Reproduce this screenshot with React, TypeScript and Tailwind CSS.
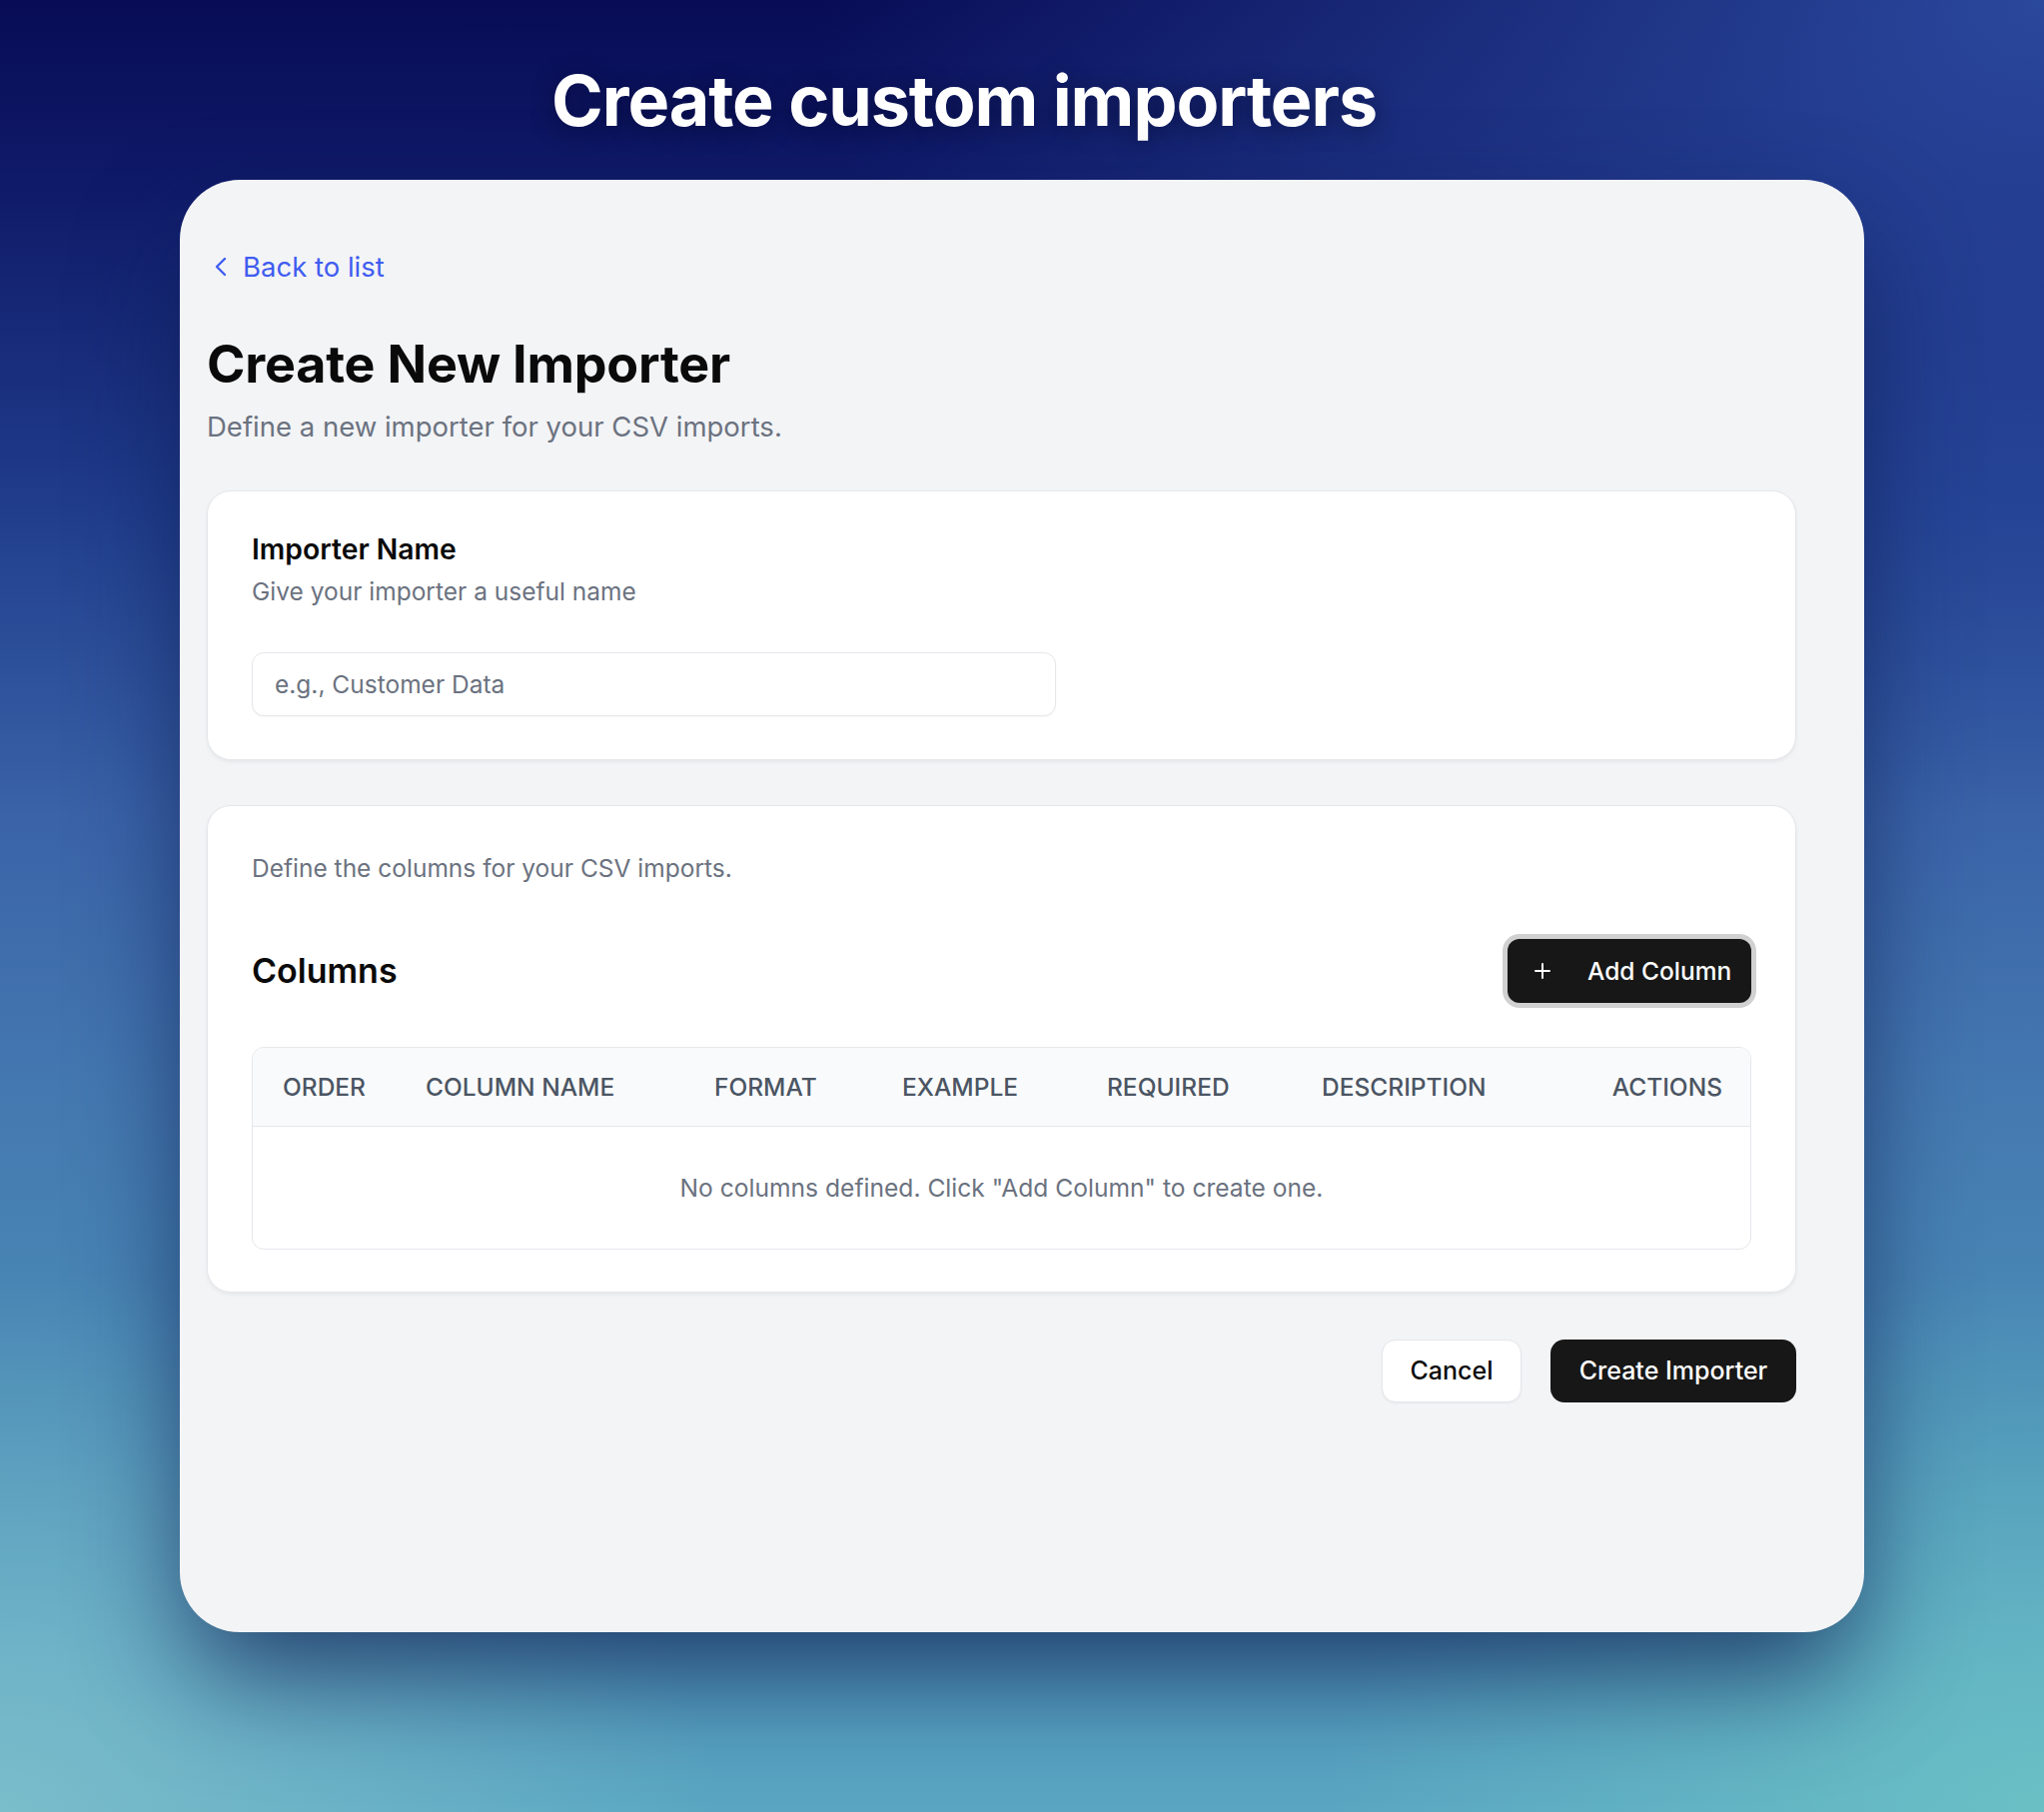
import { ChevronLeft, Plus } from "lucide-react"

const headers = [
  { label: "Order", w: "w-[143px]" },
  { label: "Column Name", w: "w-[289px]" },
  { label: "Format", w: "w-[188px]" },
  { label: "Example", w: "w-[205px]" },
  { label: "Required", w: "w-[215px]" },
  { label: "Description", w: "flex-1" },
]

export default function App() {
  return (
    <div className="h-[1814px] w-full overflow-hidden font-['Inter',sans-serif] bg-[radial-gradient(ellipse_60%_45%_at_100%_0%,rgba(48,82,168,0.85),transparent),radial-gradient(ellipse_35%_30%_at_0%_100%,rgba(130,195,205,0.8),transparent),radial-gradient(ellipse_35%_30%_at_100%_100%,rgba(110,198,198,0.8),transparent),linear-gradient(to_bottom,#080c56_0%,#0f1a68_10%,#203d8c_28%,#3a63a8_45%,#4478b0_60%,#4a8cb6_78%,#559fc0_92%,#5aa6c2_100%)] flex flex-col items-center">
      <div className="w-[1686px] pl-[372px] pt-[66px]">
        <h1 className="text-[70px] leading-[70px] font-bold text-white tracking-[-1.1px] [text-shadow:0_4px_24px_rgba(0,0,20,0.45)]">
          Create custom importers
        </h1>
      </div>

      <div className="mt-[44px] w-[1686px] h-[1454px] rounded-[60px] bg-[#f3f4f6] pl-[27px] pr-[68px] pt-[67px] shadow-[0_50px_110px_-10px_rgba(14,28,80,0.75)]">
        <a href="#" className="flex items-center gap-[6px] h-[40px] text-[27.5px] leading-[40px] text-[#3f5cf0] -ml-[2px]">
          <ChevronLeft size={32} strokeWidth={1.8} />
          <span>Back to list</span>
        </a>

        <h2 className="mt-[48px] text-[52px] leading-[60px] font-bold text-[#0a0a0a] tracking-[-0.2px]">Create New Importer</h2>
        <p className="mt-[14px] text-[27.5px] leading-[36px] text-[#6b7280]">Define a new importer for your CSV imports.</p>

        <div className="mt-[46px] rounded-[24px] border border-[#e5e7eb] bg-white px-[44px] pt-[40px] pb-[43px] shadow-[0_2px_4px_rgba(0,0,0,0.06)]">
          <h3 className="text-[28.3px] leading-[36px] font-semibold text-[#0a0a0a]">Importer Name</h3>
          <p className="mt-[8px] text-[24.5px] leading-[32px] text-[#6b7280]">Give your importer a useful name</p>
          <input
            placeholder="e.g., Customer Data"
            className="mt-[45px] block w-[805px] h-[64px] rounded-[12px] border border-[#e5e7eb] bg-white px-[22px] text-[24.5px] text-[#111827] placeholder:text-[#6b7280] shadow-[0_1px_2px_rgba(0,0,0,0.04)] outline-none"
          />
        </div>

        <div className="mt-[45px] rounded-[24px] border border-[#e5e7eb] bg-white px-[44px] pt-[46px] pb-[42px] shadow-[0_2px_4px_rgba(0,0,0,0.06)]">
          <p className="text-[24.5px] leading-[32px] text-[#6b7280]">Define the columns for your CSV imports.</p>

          <div className="mt-[55px] flex items-center justify-between h-[64px]">
            <h3 className="text-[34px] leading-[44px] font-semibold text-[#0a0a0a]">Columns</h3>
            <button className="flex items-center h-[64px] w-[244px] rounded-[12px] bg-[#171717] pl-[23px] text-white text-[24.5px] font-medium ring-[5px] ring-[#d1d1d1]">
              <Plus size={24} strokeWidth={2} />
              <span className="ml-[33px]">Add Column</span>
            </button>
          </div>

          <div className="mt-[44px] rounded-[12px] border border-[#e5e7eb] overflow-hidden">
            <div className="flex items-center h-[79px] bg-[#f9fafb] border-b border-[#e5e7eb] text-[24.5px] font-medium uppercase text-[#4b5563]">
              {headers.map((h) => (
                <div key={h.label} className={`${h.w} pl-[30px]`}>
                  {h.label}
                </div>
              ))}
              <div className="pr-[28px]">Actions</div>
            </div>
            <div className="h-[122px] flex items-center justify-center text-[24.6px] text-[#6b7280]">
              No columns defined. Click "Add Column" to create one.
            </div>
          </div>
        </div>

        <div className="mt-[47px] flex justify-end gap-[29px]">
          <button className="h-[63px] w-[140px] rounded-[14px] border border-[#e5e7eb] bg-white text-[25px] font-medium text-[#0a0a0a] shadow-[0_1px_2px_rgba(0,0,0,0.05)]">
            Cancel
          </button>
          <button className="h-[63px] w-[246px] rounded-[14px] bg-[#171717] text-[25px] font-medium text-white">
            Create Importer
          </button>
        </div>
      </div>
    </div>
  )
}
